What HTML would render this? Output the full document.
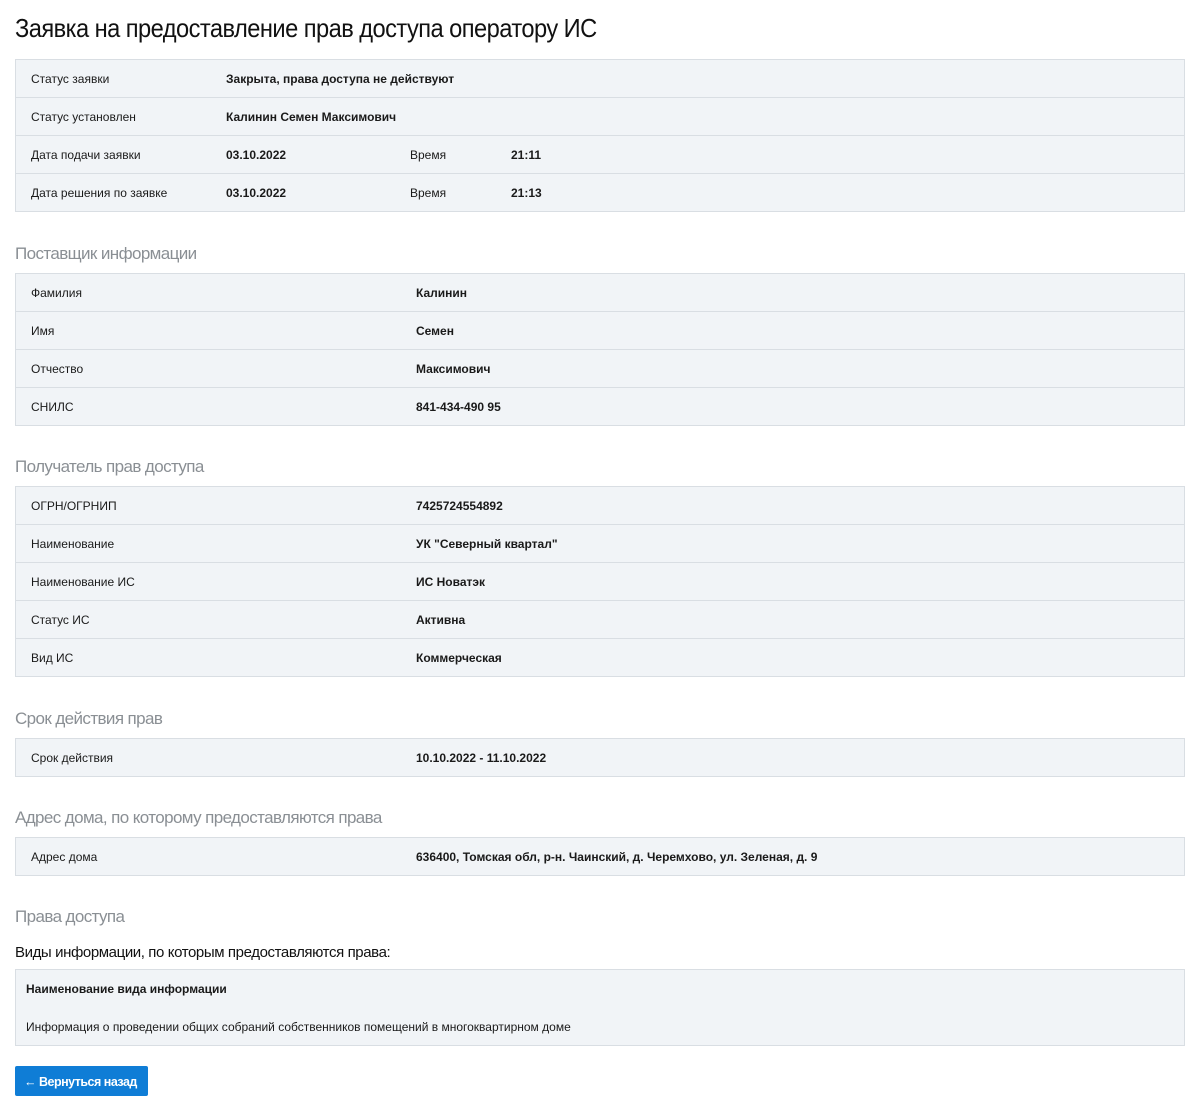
<!DOCTYPE html>
<html><head><meta charset="utf-8">
<style>
*{margin:0;padding:0;box-sizing:border-box}
body{width:1195px;height:1106px;background:#fff;font-family:"Liberation Sans",sans-serif;color:#1a1a1a;position:relative;overflow:hidden}
.a{position:absolute;white-space:nowrap}
h1{position:absolute;left:15px;top:13px;font-size:26px;font-weight:normal;letter-spacing:-0.6px;color:#111;transform:scaleX(0.91);transform-origin:left top;white-space:nowrap}
.t{position:absolute;left:15px;width:1170px;background:#f1f4f7;border:1px solid #d9dee3}
.r{height:38px;border-top:1px solid #d9dee3;position:relative;font-size:12px}
.r:first-child{border-top:none;height:37px}
.r span{position:absolute;top:12px;white-space:nowrap}
.l{left:15px}
.b{font-weight:bold}
.h{position:absolute;left:15px;font-size:17px;color:#8a8f94;letter-spacing:-0.6px}
.btn{position:absolute;left:15px;top:1066px;width:133px;height:30px;background:#0f7dd6;border-radius:2px;color:#fff;font-size:12.5px;font-weight:bold;line-height:32px;padding-left:9px;letter-spacing:-0.5px;white-space:nowrap}
</style></head><body>
<h1>Заявка на предоставление прав доступа оператору ИС</h1>

<div class="t" style="top:59px">
<div class="r"><span class="l">Статус заявки</span><span class="b" style="left:210px">Закрыта, права доступа не действуют</span></div>
<div class="r"><span class="l">Статус установлен</span><span class="b" style="left:210px">Калинин Семен Максимович</span></div>
<div class="r"><span class="l">Дата подачи заявки</span><span class="b" style="left:210px">03.10.2022</span><span style="left:394px">Время</span><span class="b" style="left:495px">21:11</span></div>
<div class="r"><span class="l">Дата решения по заявке</span><span class="b" style="left:210px">03.10.2022</span><span style="left:394px">Время</span><span class="b" style="left:495px">21:13</span></div>
</div>

<div class="h" style="top:244px">Поставщик информации</div>
<div class="t" style="top:273px">
<div class="r"><span class="l">Фамилия</span><span class="b" style="left:400px">Калинин</span></div>
<div class="r"><span class="l">Имя</span><span class="b" style="left:400px">Семен</span></div>
<div class="r"><span class="l">Отчество</span><span class="b" style="left:400px">Максимович</span></div>
<div class="r"><span class="l">СНИЛС</span><span class="b" style="left:400px">841-434-490 95</span></div>
</div>

<div class="h" style="top:457px">Получатель прав доступа</div>
<div class="t" style="top:486px">
<div class="r"><span class="l">ОГРН/ОГРНИП</span><span class="b" style="left:400px">7425724554892</span></div>
<div class="r"><span class="l">Наименование</span><span class="b" style="left:400px">УК "Северный квартал"</span></div>
<div class="r"><span class="l">Наименование ИС</span><span class="b" style="left:400px">ИС Новатэк</span></div>
<div class="r"><span class="l">Статус ИС</span><span class="b" style="left:400px">Активна</span></div>
<div class="r"><span class="l">Вид ИС</span><span class="b" style="left:400px">Коммерческая</span></div>
</div>

<div class="h" style="top:709px">Срок действия прав</div>
<div class="t" style="top:738px">
<div class="r"><span class="l">Срок действия</span><span class="b" style="left:400px">10.10.2022 - 11.10.2022</span></div>
</div>

<div class="h" style="top:808px">Адрес дома, по которому предоставляются права</div>
<div class="t" style="top:837px">
<div class="r"><span class="l">Адрес дома</span><span class="b" style="left:400px">636400, Томская обл, р-н. Чаинский, д. Черемхово, ул. Зеленая, д. 9</span></div>
</div>

<div class="h" style="top:907px">Права доступа</div>
<div class="a" style="left:15px;top:944px;font-size:15px;color:#111;letter-spacing:-0.4px">Виды информации, по которым предоставляются права:</div>
<div class="t" style="top:969px;height:77px;font-size:12px">
<span class="a b" style="left:10px;top:12px">Наименование вида информации</span>
<span class="a" style="left:10px;top:50px">Информация о проведении общих собраний собственников помещений в многоквартирном доме</span>
</div>

<div class="btn">← Вернуться назад</div>
</body></html>
